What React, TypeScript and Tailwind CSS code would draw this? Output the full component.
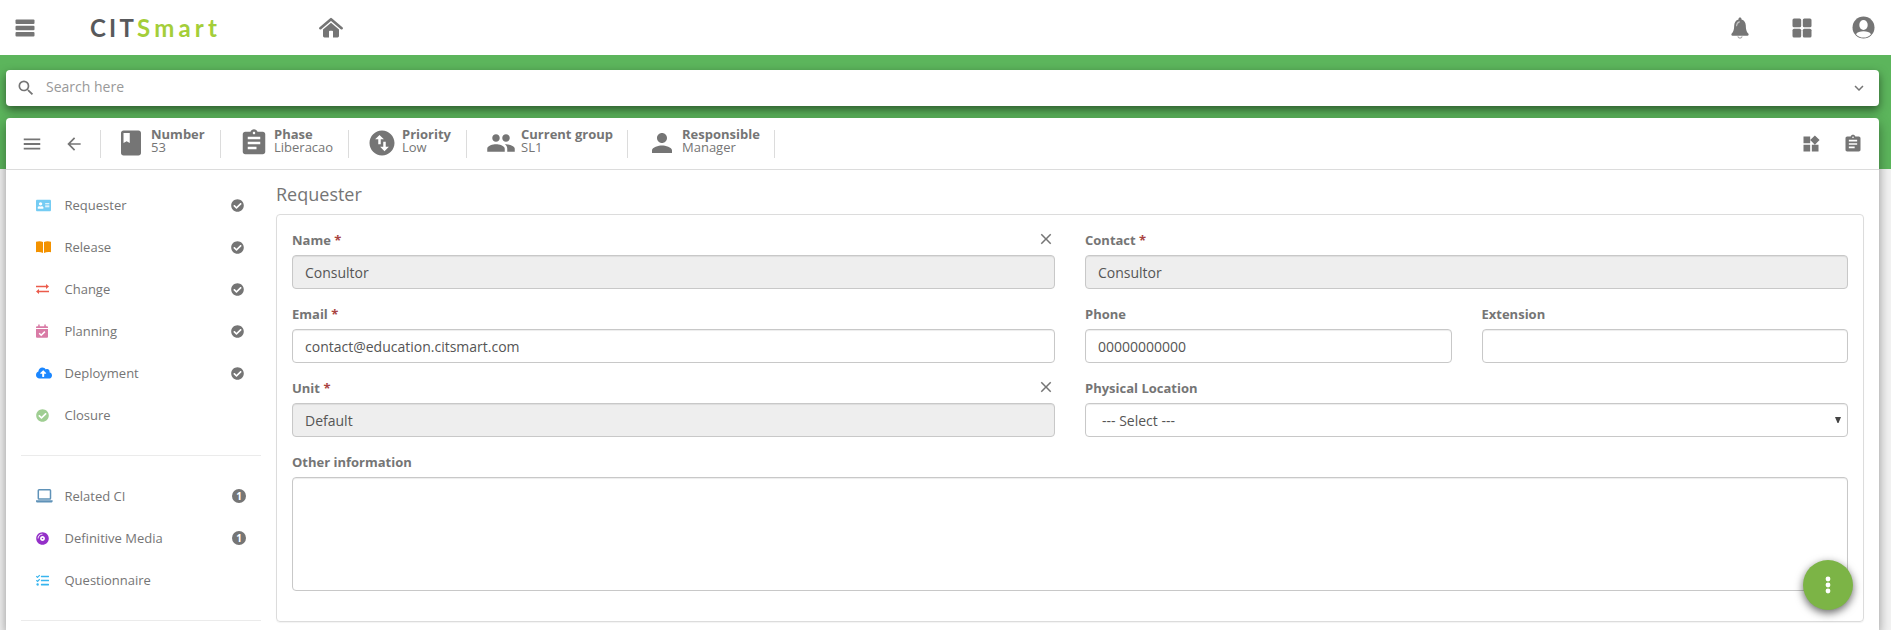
import type { ReactNode } from 'react'
import {
  MdArrowBack, MdAssignment, MdBook, MdClose, MdExpandMore, MdMenu, MdPeople, MdPerson, MdSearch,
  MdSwapVerticalCircle, MdWidgets,
} from 'react-icons/md'
import {
  FaAddressCard, FaCalendarCheck, FaCheckCircle, FaCloudUploadAlt, FaCompactDisc, FaTasks,
} from 'react-icons/fa'

function BarsIcon() {
  return (
    <svg width="20" height="18" viewBox="0 0 20 18" fill="currentColor">
      <rect x="0.500" y="0.500" width="19" height="4.500" rx="1" />
      <rect x="0.500" y="6.800" width="19" height="4.500" rx="1" />
      <rect x="0.500" y="13.100" width="19" height="4.500" rx="1" />
    </svg>
  )
}

function HomeIcon() {
  return (
    <svg width="24" height="21" viewBox="0 0 24 21" fill="currentColor">
      <path d="M1.400 11.200 12 2.200l10.600 9" fill="none" stroke="currentColor" strokeWidth="2.600" strokeLinejoin="round" strokeLinecap="round" />
      <path d="M12 5.700 4 12.400V19a1.400 1.400 0 0 0 1.400 1.400H10V14.500a.8.8 0 0 1 .8-.8h2.400a.8.8 0 0 1 .8.8v5.900h4.600A1.400 1.400 0 0 0 20 19v-6.600z" />
    </svg>
  )
}

function BellIcon() {
  return (
    <svg width="18" height="22" viewBox="0 0 18 22">
      <path d="M9 .4c-.9 0-1.500.6-1.500 1.500v.6C4.700 3.200 3.300 5.500 3.200 8.500c-.1 4.500-.9 6.200-2.500 8.100-.7.9-.3 2.100.8 2.100h15c1.100 0 1.500-1.200.8-2.100-1.600-1.900-2.400-3.600-2.500-8.100-.1-3-1.500-5.300-4.300-6v-.6C10.500 1 9.900.4 9 .4z" fill="currentColor" />
      <path d="M5.600 8.800c.1-2 1-3.400 2.800-3.900" fill="none" stroke="#c4c4c4" strokeWidth="1.100" strokeLinecap="round" />
      <path d="M6.800 19.400c.3 1.100 1.100 1.700 2.200 1.700s1.900-.6 2.200-1.700" fill="none" stroke="#a5a5a5" strokeWidth="1.100" />
    </svg>
  )
}

function GridIcon() {
  return (
    <svg width="20" height="20" viewBox="0 0 20 20" fill="currentColor">
      <rect x="0.500" y="0.500" width="8.700" height="8.700" rx="1.500" />
      <rect x="10.800" y="0.500" width="8.700" height="8.700" rx="1.500" />
      <rect x="0.500" y="10.800" width="8.700" height="8.700" rx="1.500" />
      <rect x="10.800" y="10.800" width="8.700" height="8.700" rx="1.500" />
    </svg>
  )
}

function UserIcon() {
  return (
    <svg width="23" height="23" viewBox="0 0 23 23">
      <circle cx="11.500" cy="11.500" r="11" fill="currentColor" />
      <ellipse cx="11.500" cy="9" rx="4.200" ry="5" fill="#fff" />
      <path d="M4 18.200c1.300-2.100 4-2.900 7.500-2.900s6.200.8 7.500 2.900c-1.800 2.100-4.500 3.400-7.500 3.400s-5.700-1.300-7.500-3.400z" fill="#fff" />
    </svg>
  )
}

function BookIcon() {
  return (
    <svg width="15" height="12" viewBox="0 0 15 12" fill="currentColor">
      <path d="M0 .7C2.400 0 5 0 7 .9V12C5 11 2.400 10.700 0 11.300z" />
      <path d="M15 .7C12.600 0 10 0 8 .9V12c2-1 4.600-1.300 7-.7z" />
    </svg>
  )
}

function ExchangeIcon() {
  return (
    <svg width="13" height="10" viewBox="0 0 13 10" fill="currentColor">
      <path d="M0 1.700h10V0l3 2.500-3 2.500V3.300H0z" />
      <path d="M13 6.700H3V5L0 7.500 3 10V8.300h10z" />
    </svg>
  )
}

function LaptopIcon() {
  return (
    <svg width="17" height="14" viewBox="0 0 17 14">
      <rect x="2.300" y="0.800" width="12.200" height="9.200" rx="0.800" fill="none" stroke="currentColor" strokeWidth="1.500" />
      <path d="M0 11.300h16.600v.9c0 .7-.7 1.300-1.600 1.300H1.600C.7 13.500 0 12.900 0 12.200z" fill="currentColor" />
    </svg>
  )
}

function PlanIcon() {
  return (
    <svg width="12" height="14" viewBox="0 0 12 14">
      <path d="M2.200.5h1.500v1.700h4.600V.5h1.500v1.700H11a1 1 0 0 1 1 1v.9H0v-.9a1 1 0 0 1 1-1h1.200z" fill="currentColor" />
      <path d="M0 5h12v7.700a1 1 0 0 1-1 1H1a1 1 0 0 1-1-1z" fill="currentColor" />
      <path d="m3.200 9.300 2 2 3.700-3.700" fill="none" stroke="#fff" strokeWidth="1.500" />
    </svg>
  )
}

function Info({ icon, label, value, width }: { icon: ReactNode; label: string; value: string; width: string }) {
  return (
    <div className={`flex h-7 shrink-0 items-center border-r border-[#dcdcdc] ${width}`}>
      {icon}
      <div className="-mt-[5px] flex flex-col text-[13px] leading-[13px]">
        <span className="font-bold whitespace-nowrap">{label}</span>
        <span>{value}</span>
      </div>
    </div>
  )
}

function Item({ icon, label, check, badge }: { icon: ReactNode; label: string; check?: boolean; badge?: string }) {
  return (
    <div className="flex h-[42px] items-center pr-[15px] pl-[15px] text-[13px]">
      <span className="flex w-[28.500px] shrink-0">{icon}</span>
      <span className="grow pt-[2px]">{label}</span>
      {check && <FaCheckCircle className="mr-[2px] size-[13px]" />}
      {badge && (
        <span className="flex size-[14px] items-center justify-center rounded-full bg-[#757575] text-[10px] leading-none font-bold text-white">
          {badge}
        </span>
      )}
    </div>
  )
}

function Field({ label, required, clear, children }: { label: string; required?: boolean; clear?: boolean; children: ReactNode }) {
  return (
    <div className="flex min-w-0 flex-1 flex-col">
      <div className="flex h-[26px] items-start justify-between text-[13px] leading-[18px] font-bold">
        <span className="pt-[2px]">
          {label} {required && <span className="text-[#a94442]">*</span>}
        </span>
        {clear && <MdClose className="mt-px size-[18px]" />}
      </div>
      {children}
    </div>
  )
}

const box = 'flex h-[34px] items-center rounded-[4px] border border-[#c8c8c8] px-3 text-[14px] text-[#555] shadow-[inset_0_1px_1px_rgba(0,0,0,0.075)]'

export default function App() {
  return (
    <div className="relative flex h-[630px] w-full flex-col overflow-hidden bg-white font-['Open_Sans',sans-serif] text-[#757575]">
      <header className="flex h-[55px] shrink-0 items-center pr-[16px] pl-[15px]">
        <div className="w-[75px]"><BarsIcon /></div>
        <div className="flex w-[229px] font-['Lato',sans-serif] text-[24px] leading-none font-bold">
          <span className="tracking-[3.200px] text-[#58595b]">CIT</span>
          <span className="tracking-[4.200px] text-[#a4ce39]">Smart</span>
        </div>
        <HomeIcon />
        <div className="ml-auto flex items-center">
          <BellIcon />
          <div className="ml-[43px]"><GridIcon /></div>
          <div className="ml-[40px]"><UserIcon /></div>
        </div>
      </header>

      <main className="flex grow flex-col bg-[linear-gradient(#5cb55c_114px,#f2f2f2_114px)] pt-[15px] pr-[12px] pl-[6px]">
        <div className="flex h-[36px] shrink-0 items-center rounded-[4px] bg-white pr-[11px] pl-[10px] shadow-[0_4px_10px_rgba(0,0,0,0.5)]">
          <MdSearch className="size-[20px]" />
          <span className="ml-[10px] grow pb-[3px] text-[14px] text-[#999]">Search here</span>
          <MdExpandMore className="-mt-px size-[18px]" />
        </div>

        <section className="mt-3 flex grow flex-col rounded-t-[4px] bg-white shadow-[0_5px_12px_rgba(0,0,0,0.4)]">
          <div className="flex h-[52px] shrink-0 items-center border-b border-[#dcdcdc] pr-[16px] pl-[15px]">
            <MdMenu className="size-[22px]" />
            <MdArrowBack className="ml-[21px] size-[20px]" />
            <div className="ml-[16px] flex h-7 border-l border-[#dcdcdc]">
              <Info icon={<MdBook className="-mt-px mr-[5px] ml-[15px] size-[30px]" />} label="Number" value="53" width="w-[120px]" />
              <Info icon={<MdAssignment className="-mt-[2px] mr-[5px] ml-[18px] size-[30px]" />} label="Phase" value="Liberacao" width="w-[128px]" />
              <Info icon={<MdSwapVerticalCircle className="-mt-[2px] mr-[5px] ml-[18px] size-[30px]" />} label="Priority" value="Low" width="w-[118px]" />
              <Info icon={<MdPeople className="-mt-[2px] mr-[5px] ml-[19px] size-[30px]" />} label="Current group" value="SL1" width="w-[161px]" />
              <Info icon={<MdPerson className="-mt-[2px] mr-[5px] ml-[19px] size-[30px]" />} label="Responsible" value="Manager" width="w-[147px]" />
            </div>
            <MdWidgets className="ml-auto size-[20px]" />
            <MdAssignment className="ml-[22px] size-[20px]" />
          </div>

          <div className="flex grow pr-[15px] pl-[15px]">
            <nav className="w-[240px] shrink-0 pt-[14px]">
              <Item icon={<FaAddressCard className="size-[15px] text-[#75ccf3]" />} label="Requester" check />
              <Item icon={<span className="text-[#f39200]"><BookIcon /></span>} label="Release" check />
              <Item icon={<span className="text-[#eb5b4b]"><ExchangeIcon /></span>} label="Change" check />
              <Item icon={<span className="text-[#d97ba6]"><PlanIcon /></span>} label="Planning" check />
              <Item icon={<FaCloudUploadAlt className="size-[16px] text-[#1a86ff]" />} label="Deployment" check />
              <Item icon={<FaCheckCircle className="size-[13px] text-[#9fce92]" />} label="Closure" />
              <div className="mt-[19px] mb-[19px] h-px bg-[#ebebeb]" />
              <Item icon={<span className="text-[#5f92b8]"><LaptopIcon /></span>} label="Related CI" badge="1" />
              <Item icon={<FaCompactDisc className="size-[13px] text-[#9430c8]" />} label="Definitive Media" badge="1" />
              <Item icon={<FaTasks className="size-[13px] text-[#38b5ee]" />} label="Questionnaire" />
              <div className="mt-[19px] h-px bg-[#ebebeb]" />
            </nav>

            <div className="ml-[15px] flex grow flex-col">
              <h1 className="flex h-[44px] items-center pt-[4px] text-[18px]">Requester</h1>
              <div className="flex h-[408px] shrink-0 flex-col gap-[14px] rounded-[4px] border border-[#dcdcdc] px-[15px] pt-[14px] shadow-[0_1px_1px_rgba(0,0,0,0.05)]">
                <div className="flex gap-[30px]">
                  <Field label="Name" required clear><div className={`${box} bg-[#eee]`}>Consultor</div></Field>
                  <Field label="Contact" required><div className={`${box} bg-[#eee]`}>Consultor</div></Field>
                </div>
                <div className="flex gap-[30px]">
                  <Field label="Email" required><div className={box}>contact@education.citsmart.com</div></Field>
                  <div className="flex min-w-0 flex-1 gap-[30px]">
                    <Field label="Phone"><div className={box}>00000000000</div></Field>
                    <Field label="Extension"><div className={box} /></Field>
                  </div>
                </div>
                <div className="flex gap-[30px]">
                  <Field label="Unit" required clear><div className={`${box} bg-[#eee]`}>Default</div></Field>
                  <Field label="Physical Location">
                    <div className={`${box} justify-between`}>
                      <span className="pl-1">--- Select ---</span>
                      <svg className="-mr-[6px]" width="6" height="6" viewBox="0 0 6 6"><path d="M0 0h6L3.500 6h-1z" fill="#444" /></svg>
                    </div>
                  </Field>
                </div>
                <div className="flex">
                  <Field label="Other information">
                    <div className="h-[114px] rounded-[4px] border border-[#c8c8c8] shadow-[inset_0_1px_1px_rgba(0,0,0,0.075)]" />
                  </Field>
                </div>
              </div>
            </div>
          </div>
        </section>
      </main>

      <div className="absolute top-[560px] right-[38px] flex size-[50px] items-center justify-center rounded-full bg-[#7cb446] shadow-[0_3px_8px_rgba(0,0,0,0.6)]">
        <svg width="6" height="18" viewBox="0 0 6 18" fill="#fff">
          <circle cx="3" cy="3" r="2.400" />
          <circle cx="3" cy="9" r="2.400" />
          <circle cx="3" cy="15" r="2.400" />
        </svg>
      </div>
    </div>
  )
}
